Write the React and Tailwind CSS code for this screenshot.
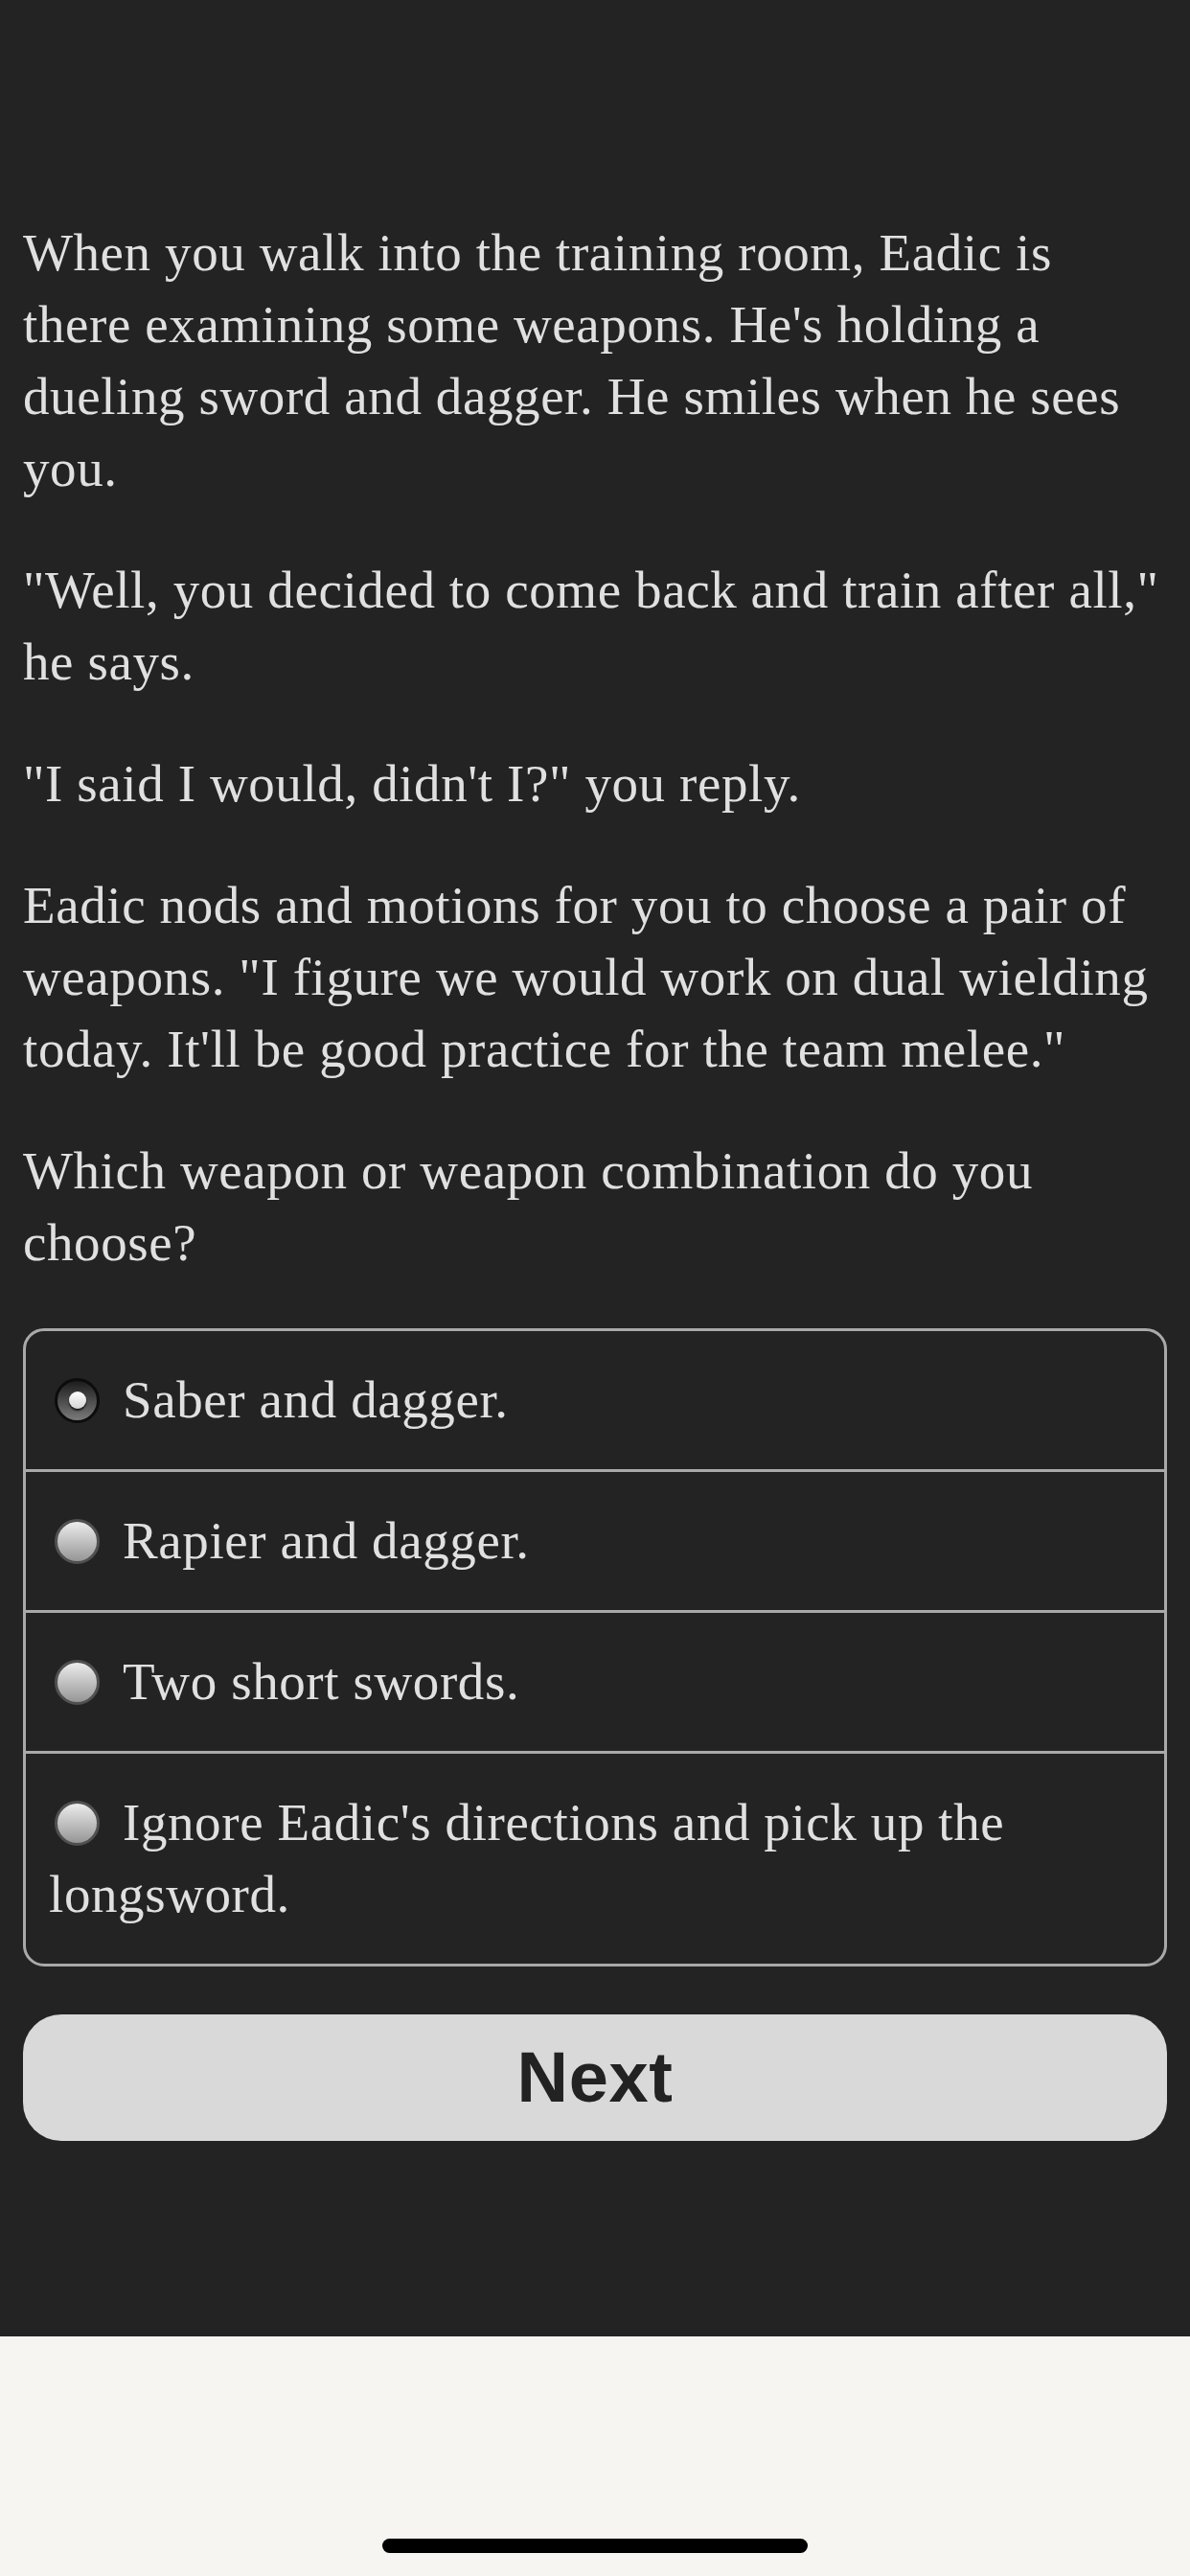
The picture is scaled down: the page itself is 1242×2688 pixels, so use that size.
import React, { useState } from 'react';

const paragraphs = [
    "When you walk into the training room, Eadic is there examining some weapons. He's holding a dueling sword and dagger. He smiles when he sees you.",
    '"Well, you decided to come back and train after all," he says.',
    '"I said I would, didn\'t I?" you reply.',
    'Eadic nods and motions for you to choose a pair of weapons. "I figure we would work on dual wielding today. It\'ll be good practice for the team melee."',
    'Which weapon or weapon combination do you choose?'
];

const options = [
    'Saber and dagger.',
    'Rapier and dagger.',
    'Two short swords.',
    "Ignore Eadic's directions and pick up the longsword."
];

const Radio = ({ checked }) => (
    checked ? (
        <span className="inline-flex items-center justify-center w-[47px] h-[47px] rounded-full border-[3px] border-[#0c0c0c] bg-[linear-gradient(#1c1c1c,#7a7a7a)] align-middle mr-[24px] ml-[6px] relative -top-[5px]">
            <span className="block w-[18px] h-[18px] rounded-full bg-[linear-gradient(#ffffff,#d4d4d4)] shadow-[0_2px_2px_rgba(0,0,0,0.8)]" />
        </span>
    ) : (
        <span className="inline-block w-[47px] h-[47px] rounded-full border-[3px] border-[#505050] bg-[linear-gradient(#ececec,#969696)] align-middle mr-[24px] ml-[6px] relative -top-[5px]" />
    )
);

export default function App() {
    const [selected, setSelected] = useState(0);

    return (
        <div className="min-h-[2688px] flex flex-col bg-[#f6f5f1]">
            <div className="bg-[#232323] text-[#e0e0e0] px-[24px] pt-[226px] pb-[204px] font-['Liberation_Serif',serif] text-[55px] leading-[75px] tracking-[0.6px]">
                {paragraphs.map((p, i) => (
                    <p key={i} className="mb-[52px]">{p}</p>
                ))}

                <div className="border-[3px] border-[#a9a9a9] rounded-[22px] overflow-hidden">
                    {options.map((opt, i) => (
                        <div
                            key={i}
                            onClick={() => setSelected(i)}
                            className={`px-[24px] pt-[34px] pb-[35px] cursor-pointer ${i > 0 ? 'border-t-[3px] border-[#a9a9a9]' : ''}`}
                        >
                            <Radio checked={selected === i} />
                            {opt}
                        </div>
                    ))}
                </div>

                <button className="mt-[50px] w-full h-[132px] rounded-[40px] bg-[#d9d9d9] text-[#222] font-['Liberation_Sans',Arial,sans-serif] font-bold text-[74px] leading-none">
                    Next
                </button>
            </div>

            <div className="flex-1 flex items-end justify-center pb-[24px]">
                <div className="w-[444px] h-[15px] rounded-full bg-black" />
            </div>
        </div>
    );
}
